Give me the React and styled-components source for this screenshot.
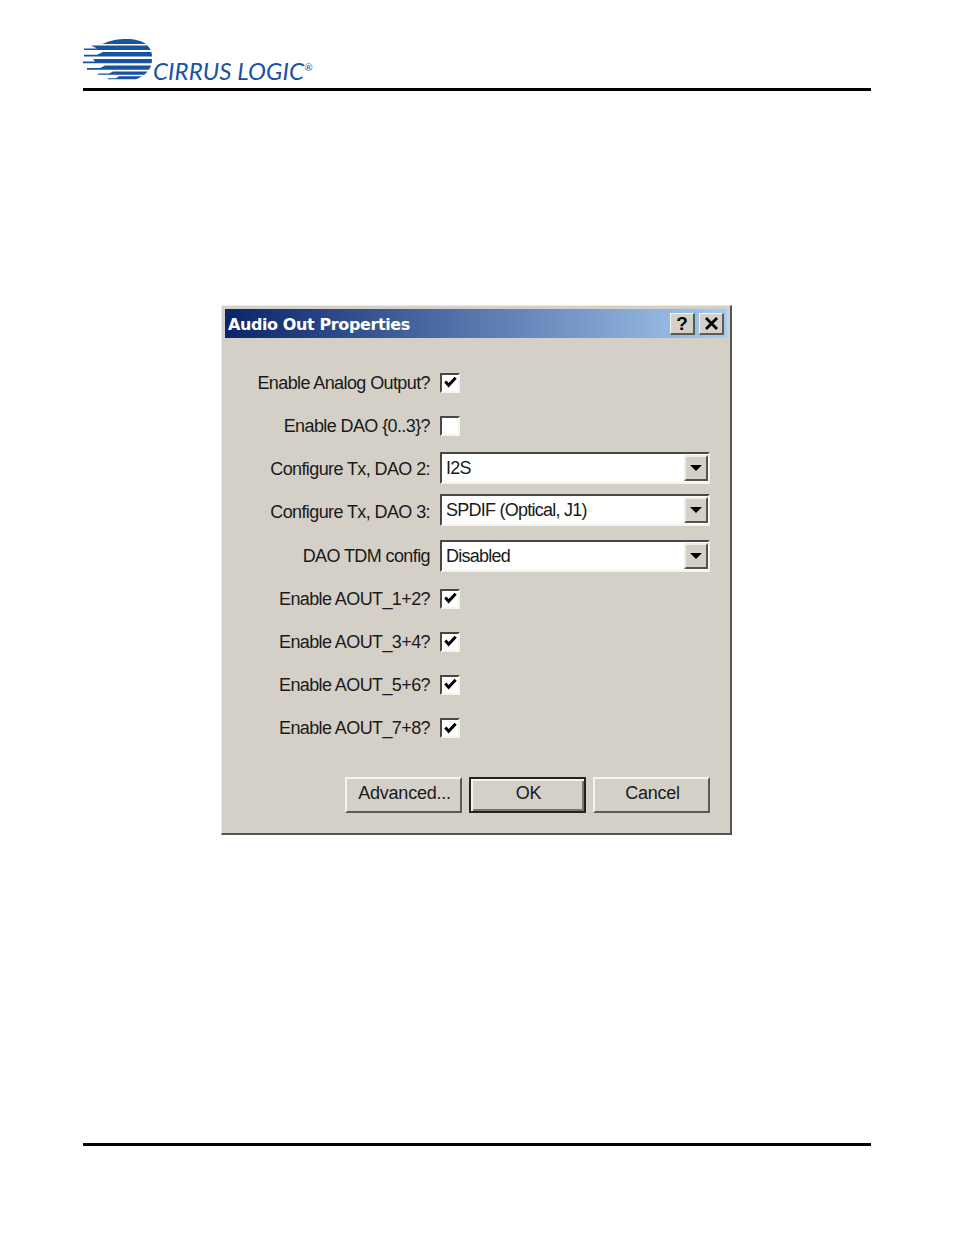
import React from "react";
import styled, { createGlobalStyle } from "styled-components";

const Global = createGlobalStyle`
  html, body { margin: 0; padding: 0; background: #fff; }
  * { box-sizing: border-box; }
`;

const Page = styled.div`
  width: 954px;
  height: 1235px;
  display: flex;
  flex-direction: column;
  overflow: hidden;
`;

const Header = styled.header`
  margin: 39px 83px 0;
`;

const LogoWrap = styled.div`
  display: flex;
  align-items: flex-start;
  height: 49px;
`;

const Wordmark = styled.span`
  margin: 18px 0 0 0;
  color: #1a52a3;
  font: italic 400 24px/28px "Lato", "Liberation Sans", sans-serif;
  letter-spacing: 0.12px;
  white-space: nowrap;
`;

const Reg = styled.sup`
  font-size: 10px;
  line-height: 0;
  vertical-align: 9px;
  letter-spacing: 0;
`;

const Rule = styled.hr`
  margin: 0;
  border: 0;
  height: 3px;
  background: #000;
`;

const FooterRule = styled(Rule)`
  margin: 308px 83px 0;
  width: 788px;
`;

const Dialog = styled.section`
  margin: 214px 0 0 221px;
  width: 511px;
  height: 530px;
  background: #d4d0c8;
  border-style: solid;
  border-width: 1px 2px 2px 1px;
  border-color: #ecebe6 #55544f #55544f #ecebe6;
  padding: 3px 3px 0 3px;
`;

const TitleBar = styled.div`
  height: 29px;
  display: flex;
  align-items: center;
  justify-content: space-between;
  padding: 0 3px 0 3px;
  background: linear-gradient(90deg, #0a246a 0%, #a6caf0 100%);
`;

const Title = styled.h1`
  margin: 2px 0 0;
  color: #fff;
  font: 700 16px/27px "DejaVu Sans", sans-serif;
  letter-spacing: -0.4px;
`;

const TitleButtons = styled.div`
  display: flex;
  gap: 4px;
`;

const TitleButton = styled.div`
  width: 25px;
  height: 22px;
  display: flex;
  align-items: center;
  justify-content: center;
  background: #d4d0c8;
  border-style: solid;
  border-width: 1px 2px 2px 1px;
  border-color: #f4f4f0 #5a5a56 #5a5a56 #f4f4f0;
  color: #000;
  font: 700 19px/1 "Liberation Sans", sans-serif;
`;

const Form = styled.div`
  display: grid;
  grid-template-columns: 205px 270px;
  grid-auto-rows: 43.15px;
  column-gap: 10px;
  align-items: center;
  margin-top: 23.4px;
`;

const Label = styled.label`
  text-align: right;
  color: #1a1a1a;
  font: 400 18px/24px "Liberation Sans", sans-serif;
  letter-spacing: -0.6px;
  white-space: nowrap;
`;

const Sunken = styled.div`
  border-style: solid;
  border-width: 2px;
  border-color: #474743 #f4f4f0 #f4f4f0 #474743;
  background: #fff;
`;

const CheckBox = styled(Sunken)`
  width: 20px;
  height: 20px;
  display: flex;
  align-items: center;
  justify-content: center;
`;

const Select = styled(Sunken)`
  width: 270px;
  height: 32px;
  margin-bottom: ${p => p.$lift || 0}px;
  display: flex;
  align-items: center;
  justify-content: space-between;
  padding: 0 0 0 4px;
  color: #1a1a1a;
  font: 400 18px/24px "Liberation Sans", sans-serif;
  letter-spacing: -0.75px;
`;

const DropButton = styled.div`
  width: 24px;
  height: 26px;
  display: flex;
  align-items: center;
  justify-content: center;
  background: #d4d0c8;
  border-style: solid;
  border-width: 2px;
  border-color: #eeede8 #55544f #55544f #eeede8;
`;

const Arrow = styled.span`
  width: 0;
  height: 0;
  border-style: solid;
  border-width: 6px 6px 0 6px;
  border-color: #000 transparent transparent transparent;
`;

const Actions = styled.div`
  display: flex;
  justify-content: flex-end;
  gap: 7px;
  margin: 27.25px 17px 0 0;
`;

const Button = styled.button`
  width: 117px;
  height: 36px;
  padding: 0 0 3px 2px;
  background: #d4d0c8;
  color: #1a1a1a;
  font: 400 18px/24px "Liberation Sans", sans-serif;
  letter-spacing: -0.25px;
  border-style: solid;
  border-width: 2px;
  border-color: ${p => p.$default ? "#222" : "#f4f4f0 #5a5a56 #5a5a56 #f4f4f0"};
  box-shadow: ${p => p.$default ? "inset 2px 2px 0 #f4f4f0, inset -2px -2px 0 #77766f" : "none"};
  outline: none;
`;

const rows = [
  { label: "Enable Analog Output?", checked: true },
  { label: "Enable DAO {0..3}?", checked: false },
  { label: "Configure Tx, DAO 2:", select: "I2S", lift: 2 },
  { label: "Configure Tx, DAO 3:", select: "SPDIF (Optical, J1)", lift: 4 },
  { label: "DAO TDM config", select: "Disabled" },
  { label: "Enable AOUT_1+2?", checked: true },
  { label: "Enable AOUT_3+4?", checked: true },
  { label: "Enable AOUT_5+6?", checked: true },
  { label: "Enable AOUT_7+8?", checked: true },
];

const Mark = () => (
  <svg width="70" height="42" viewBox="0 0 70 42" fill="#1a52a3" style={{ flex: "none" }}>
    <path d="M19 5 C28 1 36 0 43 0 C52 0 59 2 63 5 Z" />
    <path d="M8 6.5 L64.5 6.5 C66 8 67 9.5 67.6 11 L14 11 L1 11 L1 9.5 L14 9.5 Z" />
    <path d="M20 13 L68.4 13 C68.8 14.5 69 16 69 17.5 L13 17.5 L1 17.5 L1 15.8 L14 15.8 Z" />
    <path d="M10 20 L69 20 C69 21.5 68.9 23 68.6 24.3 L14 24.3 L0 24.3 L0 22.6 L12 22.6 Z" />
    <path d="M22 26.5 L68 26.5 C67.5 28 66.8 29.5 66 30.7 L18 30.7 L4 30.7 L4 29 L17 29 Z" />
    <path d="M30 32.5 L64.5 32.5 C63.5 33.8 62.5 34.8 61.2 35.8 L26 35.8 L15 35.8 L15 34.6 L26 34.6 Z" />
    <path d="M36 37.3 L59.2 37.3 C57.5 38.4 55.5 39.4 53 40.2 L34 40.2 L25 40.2 L25 39.2 L33 39.2 Z" />
  </svg>
);

const Check = () => (
  <svg width="15" height="15" viewBox="0 0 16 16">
    <path d="M2.5 7 L6 11 L13.5 3" fill="none" stroke="#000" strokeWidth="3.2" />
  </svg>
);

export default function App() {
  return (
    <Page>
      <Global />
      <Header>
        <LogoWrap>
          <Mark />
          <Wordmark>CIRRUS LOGIC<Reg>®</Reg></Wordmark>
        </LogoWrap>
        <Rule />
      </Header>
      <Dialog>
        <TitleBar>
          <Title>Audio Out Properties</Title>
          <TitleButtons>
            <TitleButton>?</TitleButton>
            <TitleButton>
              <svg width="15" height="13" viewBox="0 0 15 13">
                <path d="M2 1 L13 12 M13 1 L2 12" stroke="#000" strokeWidth="2.8" fill="none" />
              </svg>
            </TitleButton>
          </TitleButtons>
        </TitleBar>
        <Form>
          {rows.map(r => (
            <React.Fragment key={r.label}>
              <Label>{r.label}</Label>
              {r.select ? (
                <Select $lift={r.lift}>
                  {r.select}
                  <DropButton><Arrow /></DropButton>
                </Select>
              ) : (
                <CheckBox>{r.checked && <Check />}</CheckBox>
              )}
            </React.Fragment>
          ))}
        </Form>
        <Actions>
          <Button>Advanced...</Button>
          <Button $default>OK</Button>
          <Button>Cancel</Button>
        </Actions>
      </Dialog>
      <FooterRule />
    </Page>
  );
}
